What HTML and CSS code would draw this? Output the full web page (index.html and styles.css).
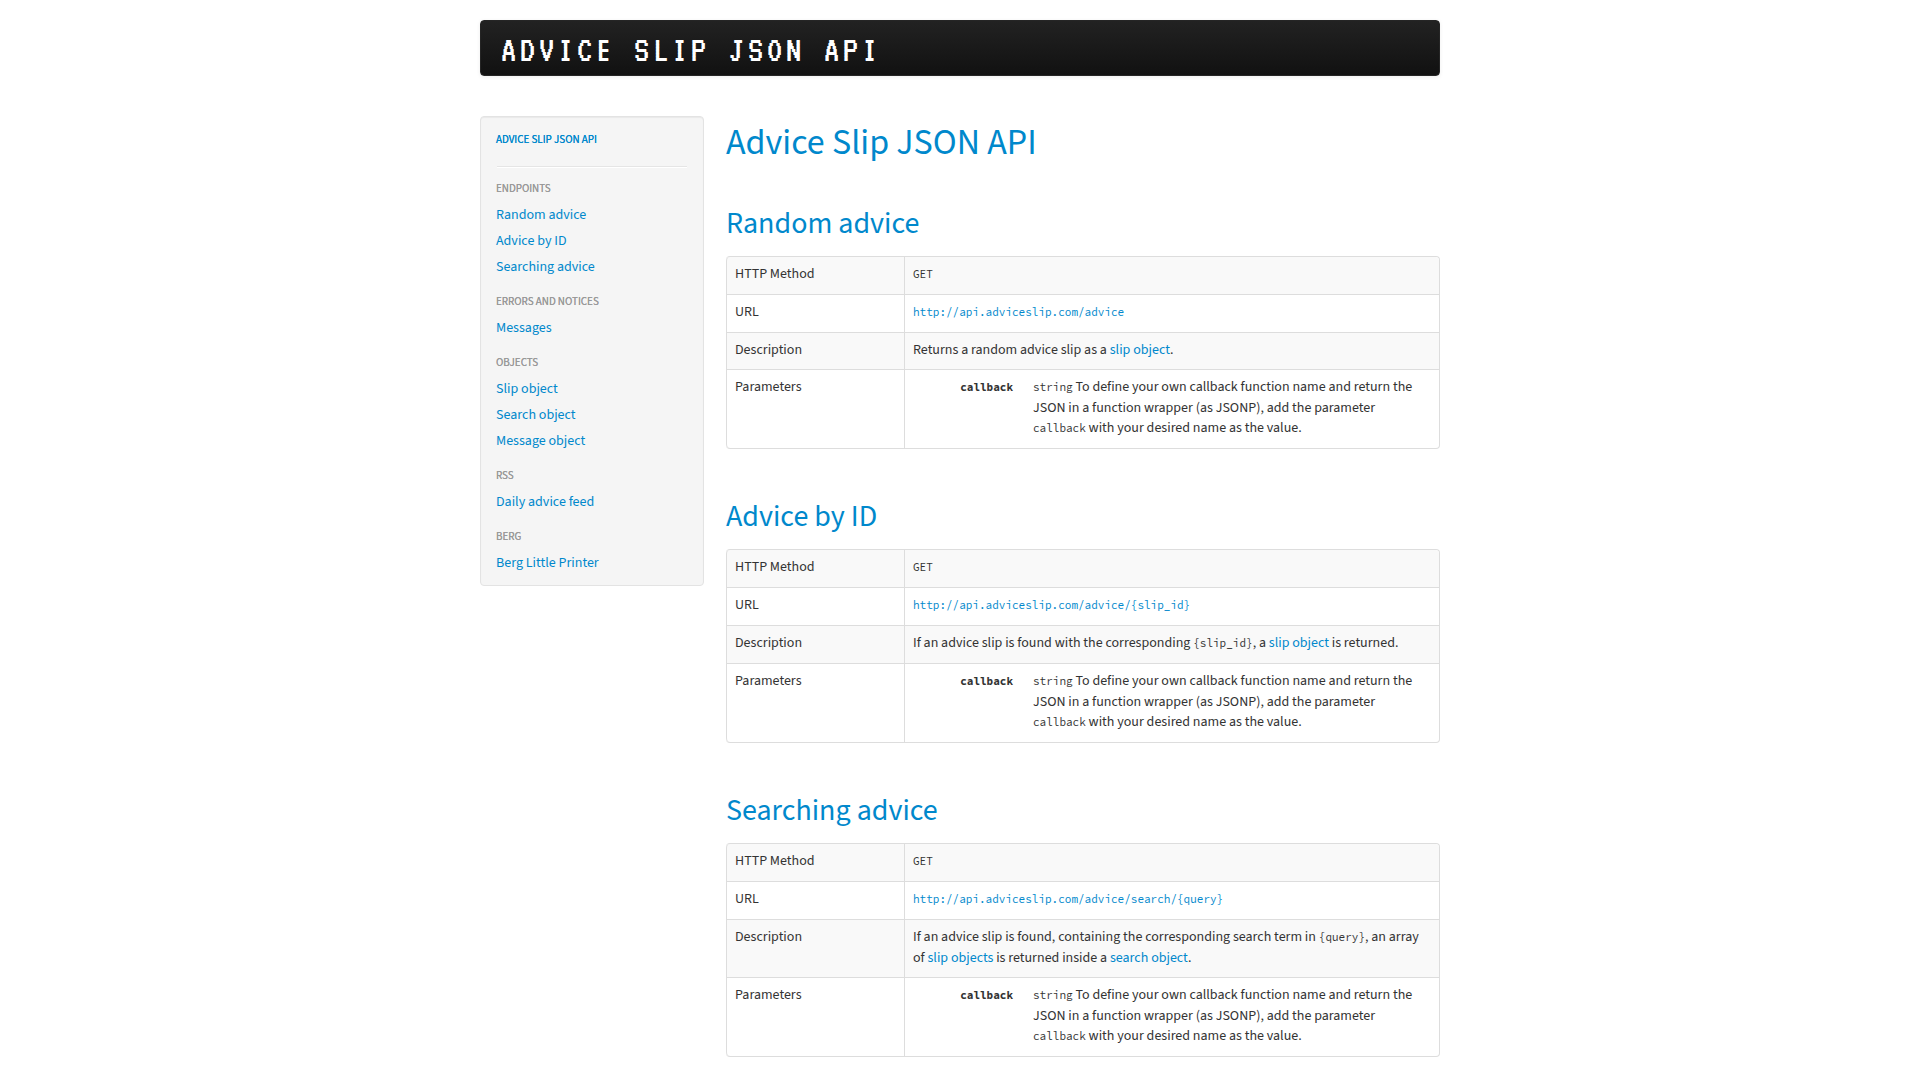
FILE: index.html
```html
<!DOCTYPE html>
<html lang="en">
<head>
<meta charset="utf-8">
<title>Advice Slip JSON API</title>
<link rel="stylesheet" href="styles.css">
</head>
<body>
<div class="container">
  <header class="navbar"><a class="brand" href="#top">ADVICE SLIP JSON API</a></header>
  <div class="layout">
    <nav class="sidebar">
      <ul class="nav-list">
        <li class="nav-title"><a href="#top">Advice Slip JSON API</a></li>
        <li class="divider"></li>
        <li class="nav-header">Endpoints</li>
        <li><a href="#random">Random advice</a></li>
        <li><a href="#by-id">Advice by ID</a></li>
        <li><a href="#search">Searching advice</a></li>
        <li class="nav-header spaced">Errors and Notices</li>
        <li><a href="#messages">Messages</a></li>
        <li class="nav-header spaced">Objects</li>
        <li><a href="#slip">Slip object</a></li>
        <li><a href="#search-object">Search object</a></li>
        <li><a href="#message-object">Message object</a></li>
        <li class="nav-header spaced">RSS</li>
        <li><a href="#rss">Daily advice feed</a></li>
        <li class="nav-header spaced">Berg</li>
        <li><a href="#berg">Berg Little Printer</a></li>
      </ul>
    </nav>
    <main class="content" id="top">
      <h1><a href="#top">Advice Slip JSON API</a></h1>
      <section id="random">
        <h2><a href="#random">Random advice</a></h2>
        <table class="endpoint">
          <tbody>
            <tr><th scope="row">HTTP Method</th><td><code>GET</code></td></tr>
            <tr><th scope="row">URL</th><td><a href="#random"><code>http://api.adviceslip.com/advice</code></a></td></tr>
            <tr><th scope="row">Description</th><td>Returns a random advice slip as a <a href="#slip">slip object</a>.</td></tr>
            <tr><th scope="row">Parameters</th><td><dl class="params"><dt><code>callback</code></dt><dd><code>string</code> To define your own callback function name and return the JSON in a function wrapper (as JSONP), add the parameter <code>callback</code> with your desired name as the value.</dd></dl></td></tr>
          </tbody>
        </table>
      </section>
      <section id="by-id">
        <h2><a href="#by-id">Advice by ID</a></h2>
        <table class="endpoint">
          <tbody>
            <tr><th scope="row">HTTP Method</th><td><code>GET</code></td></tr>
            <tr><th scope="row">URL</th><td><a href="#by-id"><code>http://api.adviceslip.com/advice/{slip_id}</code></a></td></tr>
            <tr><th scope="row">Description</th><td>If an advice slip is found with the corresponding <code>{slip_id}</code>, a <a href="#slip">slip object</a> is returned.</td></tr>
            <tr><th scope="row">Parameters</th><td><dl class="params"><dt><code>callback</code></dt><dd><code>string</code> To define your own callback function name and return the JSON in a function wrapper (as JSONP), add the parameter <code>callback</code> with your desired name as the value.</dd></dl></td></tr>
          </tbody>
        </table>
      </section>
      <section id="search">
        <h2><a href="#search">Searching advice</a></h2>
        <table class="endpoint">
          <tbody>
            <tr><th scope="row">HTTP Method</th><td><code>GET</code></td></tr>
            <tr><th scope="row">URL</th><td><a href="#search"><code>http://api.adviceslip.com/advice/search/{query}</code></a></td></tr>
            <tr><th scope="row">Description</th><td>If an advice slip is found, containing the corresponding search term in <code>{query}</code>, an array of <a href="#slip">slip objects</a> is returned inside a <a href="#search-object">search object</a>.</td></tr>
            <tr><th scope="row">Parameters</th><td><dl class="params"><dt><code>callback</code></dt><dd><code>string</code> To define your own callback function name and return the JSON in a function wrapper (as JSONP), add the parameter <code>callback</code> with your desired name as the value.</dd></dl></td></tr>
          </tbody>
        </table>
      </section>
    </main>
  </div>
</div>
</body>
</html>
```
FILE: styles.css
```css
* { box-sizing: border-box; }

body {
  margin: 0;
  background: #fff;
  color: #333;
  font: 14px/20px "Source Sans Pro", "Source Sans 3", "Noto Sans CJK JP", "Noto Sans", sans-serif;
}

a { color: #0088cc; text-decoration: none; }
a:hover { text-decoration: underline; }

code {
  font-family: "Source Code Pro", "Liberation Mono", monospace;
  font-size: 11px;
  line-height: 21px;
}

.container { max-width: 960px; margin: 0 auto; padding: 20px 0 40px; }

.navbar {
  display: flex;
  align-items: center;
  height: 56px;
  padding: 4px 20px 0;
  border: 1px solid #252525;
  border-radius: 4px;
  background: linear-gradient(#222, #111);
  box-shadow: 0 1px 4px rgba(0, 0, 0, .07);
}

.brand {
  color: #fff;
  font: 38px/40px "VT323", "Share Tech Mono", "Liberation Mono", monospace;
  letter-spacing: .1em;
}

.layout {
  display: grid;
  grid-template-columns: 224px minmax(0, 1fr);
  column-gap: 22px;
  align-items: start;
  margin-top: 40px;
}

.sidebar {
  padding: 9px 16px;
  border: 1px solid #e3e3e3;
  border-radius: 4px;
  background: #f5f5f5;
  box-shadow: inset 0 1px 1px rgba(0, 0, 0, .05);
}

.nav-list { margin: 0; padding: 0; list-style: none; }
.nav-list li { padding: 3px 0; margin-left: -1px; }
.nav-list a { display: block; }

.nav-list .nav-title,
.nav-list .nav-header {
  color: #999;
  font-size: 11px;
  text-shadow: 0 0 0 currentColor;
  text-transform: uppercase;
}

.nav-list .nav-title { padding-top: 4px; }
.nav-title a { text-shadow: 0 0 0 currentColor; }

.nav-list .spaced { margin-top: 9px; }

.nav-list .divider {
  height: 2px;
  margin: 13px 0 8px;
  padding: 0;
  background: #e5e5e5;
  border-bottom: 1px solid #fff;
}

h1, h2 { margin: 0; font-weight: normal; }
h1 { font-size: 36px; line-height: 40px; padding: 7px 0 37px; }
h2 { font-size: 30px; line-height: 40px; padding: 4px 0 12px; }

section + section { margin-top: 44px; }

.endpoint {
  width: 100%;
  table-layout: fixed;
  border: 1px solid #ddd;
  border-left: 0;
  border-radius: 4px;
  border-collapse: separate;
  border-spacing: 0;
}

.endpoint th,
.endpoint td {
  padding: 7px 8px 9px;
  border-top: 1px solid #ddd;
  border-left: 1px solid #ddd;
  font-weight: normal;
  text-align: left;
  vertical-align: top;
}

.endpoint th { width: 178px; }
.endpoint tr:first-child > * { border-top: 0; }
.endpoint tr:nth-child(odd) > * { background: #f9f9f9; }
.endpoint tr:first-child th { border-top-left-radius: 4px; }
.endpoint tr:first-child td { border-top-right-radius: 4px; }
.endpoint tr:last-child th { border-bottom-left-radius: 4px; }
.endpoint tr:last-child td { border-bottom-right-radius: 4px; }

.params {
  display: grid;
  grid-template-columns: 100px minmax(0, 1fr);
  column-gap: 20px;
  margin: 0;
  padding-right: 8px;
}

.params dt { font-weight: bold; text-align: right; }
.params dd { margin: 0; }
```
